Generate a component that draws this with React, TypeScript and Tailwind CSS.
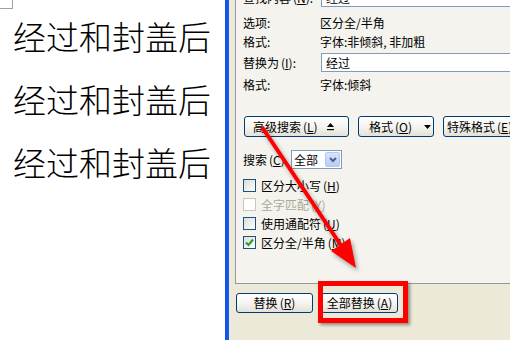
import React from 'react';

const Mn = ({ k }: { k: string }) => (
  <span className="ml-[2px]">
    (<span className="underline underline-offset-1">{k}</span>)
  </span>
);

const XpButton = ({ children, className }: { children: React.ReactNode; className?: string }) => (
  <div
    className={`flex shrink-0 items-center rounded-[3px] border border-[#003c74] bg-linear-to-b from-white via-[#f5f4f0] to-[#e3e1d8] text-[12px] ${className ?? ''}`}
  >
    {children}
  </div>
);

const CheckRow = ({ label, k, checked, disabled }: { label: string; k: string; checked?: boolean; disabled?: boolean }) => (
  <div className="flex h-[19px] items-center gap-[5px]">
    <div
      className={`flex h-[13px] w-[13px] items-center justify-center border ${
        disabled ? 'border-[#cac8bb] bg-white' : 'border-[#1c5180] bg-linear-to-br from-[#dcdcd7] to-white'
      }`}
    >
      {checked && (
        <svg width="9" height="9" viewBox="0 0 9 9">
          <polyline points="1,4.5 3.5,7 8,1.5" fill="none" stroke="#21a121" strokeWidth="2" />
        </svg>
      )}
    </div>
    <span className={disabled ? 'text-[#aca899]' : 'text-black'}>
      {label}
      <Mn k={k} />
    </span>
  </div>
);

const InfoRow = ({ label, value }: { label: string; value: string }) => (
  <div className="flex h-[16px] items-center">
    <span className="w-[77px] shrink-0">{label}</span>
    <span>{value}</span>
  </div>
);

const Doc = () => (
  <div className="w-[225px] shrink-0 bg-white">
    <div className="h-[9px] w-[13px] border-b border-r border-[#a0a0a0]" />
    <div className="-mt-[4px] pl-[13px] font-['Noto_Sans_CJK_SC',sans-serif] text-[33px] font-light leading-[63px] text-black">
      <div>经过和封盖后</div>
      <div>经过和封盖后</div>
      <div>经过和封盖后</div>
    </div>
  </div>
);

const Dialog = () => (
  <div className="w-[300px] shrink-0 bg-[#ece9d8] pl-[6px] text-[12px] text-black">
    <div className="-mt-[20px] border border-[#919b9c] bg-[#f4f3ee] pb-[31px] pl-[7px] pt-[7px]">
      <div className="flex h-[19px] items-center">
        <span className="w-[78px] shrink-0">
          查找内容<Mn k="N" />:
        </span>
        <div className="flex h-[19px] w-[220px] items-center border border-[#7f9db9] bg-white pl-[4px]">经过</div>
      </div>
      <div className="mt-[8px]">
        <InfoRow label="选项:" value="区分全/半角" />
      </div>
      <div className="mt-[3px]">
        <InfoRow label="格式:" value="字体:非倾斜, 非加粗" />
      </div>
      <div className="mt-[3px] flex h-[19px] items-center">
        <span className="w-[78px] shrink-0">
          替换为<Mn k="I" />:
        </span>
        <div className="flex h-[19px] w-[220px] items-center border border-[#7f9db9] bg-white pl-[4px]">经过</div>
      </div>
      <div className="mt-[5px]">
        <InfoRow label="格式:" value="字体:倾斜" />
      </div>

      <div className="ml-[1px] mt-[23px] flex h-[21px] gap-[9px]">
        <XpButton className="h-[21px] w-[105px] gap-[9px] pl-[8px]">
          <span>
            高级搜索<Mn k="L" />
          </span>
          <svg width="7" height="8" viewBox="0 0 7 8">
            <polygon points="3.5,0 7,4 0,4" fill="#000" />
            <rect x="0" y="6" width="7" height="1.2" fill="#000" />
          </svg>
        </XpButton>
        <XpButton className="h-[21px] w-[76px] gap-[12px] pl-[10px]">
          <span>
            格式<Mn k="O" />
          </span>
          <svg width="7" height="4" viewBox="0 0 7 4">
            <polygon points="0,0 7,0 3.5,4" fill="#000" />
          </svg>
        </XpButton>
        <XpButton className="h-[21px] w-[90px] pl-[3px]">
          <span>
            特殊格式<Mn k="E" />
          </span>
        </XpButton>
      </div>

      <div className="mt-[13px] flex h-[19px] items-center">
        <span className="w-[48px] shrink-0">
          搜索<Mn k="C" />
        </span>
        <div className="flex h-[19px] w-[51px] items-center border border-[#7f9db9] bg-white">
          <span className="flex-1 pl-[2px]">全部</span>
          <div className="m-[1px] flex h-[15px] w-[15px] items-center justify-center rounded-[2px] border border-[#b2c7f2] bg-linear-to-b from-[#d8e4fc] to-[#b7cbf5]">
            <svg width="8" height="6" viewBox="0 0 8 6">
              <polyline points="1,1 4,4 7,1" fill="none" stroke="#4d6185" strokeWidth="2" />
            </svg>
          </div>
        </div>
      </div>

      <div className="mt-[7px]">
        <CheckRow label="区分大小写" k="H" />
        <CheckRow label="全字匹配" k="Y" disabled />
        <CheckRow label="使用通配符" k="U" />
        <CheckRow label="区分全/半角" k="M" checked />
      </div>
    </div>

    <div className="ml-[1px] mt-[9px] flex gap-[8px]">
      <XpButton className="h-[20px] w-[77px] justify-center">
        <span>
          替换<Mn k="R" />
        </span>
      </XpButton>
      <XpButton className="h-[20px] w-[77px] justify-center">
        <span>
          全部替换<Mn k="A" />
        </span>
      </XpButton>
    </div>
  </div>
);

const Overlay = () => (
  <>
    <svg
      className="pointer-events-none absolute left-0 top-0 drop-shadow-[2px_3px_2px_rgba(0,0,0,0.35)]"
      width="510"
      height="340"
      viewBox="0 0 510 340"
    >
      <line x1="262" y1="127" x2="342" y2="247" stroke="#ff0000" strokeWidth="4" />
      <polygon points="356,268 331,251 350,238" fill="#ff0000" />
    </svg>
    <div className="pointer-events-none absolute left-[318px] top-[281px] h-[42px] w-[90px] border-[5px] border-[#ff0000] shadow-[2px_2px_3px_rgba(0,0,0,0.4)]" />
  </>
);

export default function App() {
  return (
    <div className="relative flex h-[340px] w-[510px] overflow-hidden bg-white font-['Noto_Sans_CJK_SC',sans-serif]">
      <Doc />
      <div className="w-[4px] shrink-0 bg-linear-to-r from-[#0b4fe2] to-[#1a5cf0]" />
      <Dialog />
      <Overlay />
    </div>
  );
}
